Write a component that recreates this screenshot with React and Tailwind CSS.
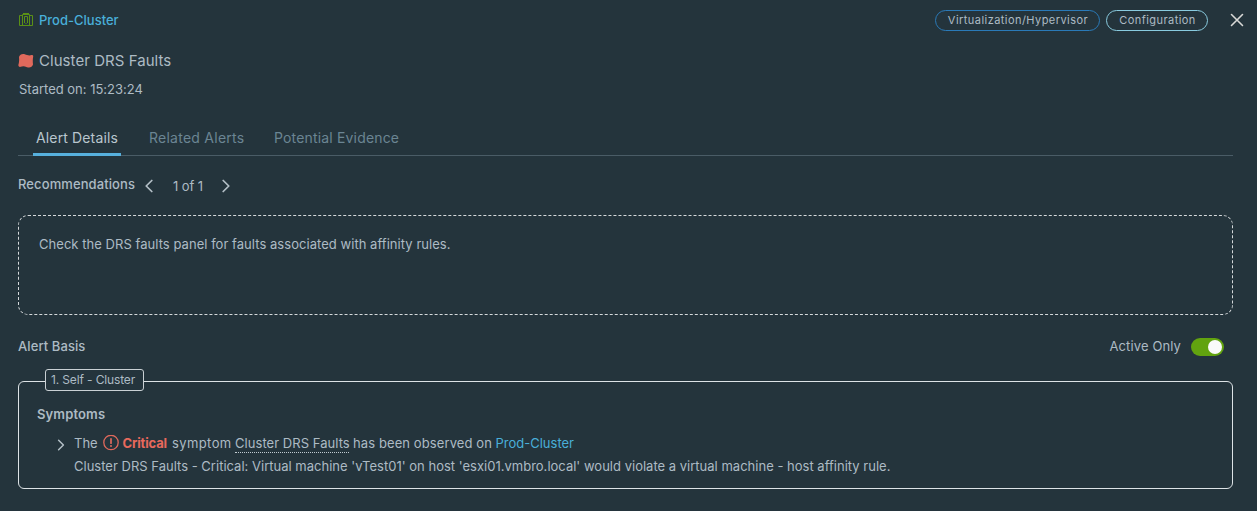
import React from 'react';

function ClusterIcon() {
  return (
    <svg width="16" height="16" viewBox="0 0 16 16" fill="none" stroke="#5a9016" strokeWidth="1" className="shrink-0">
      <path d="M4 3.5H1.5V13.5H14.5V3.5H12" />
      <path d="M4.5 13.5V2.5H11.5V13.5" />
      <path d="M5 1.5H11" />
      <path d="M6.5 11V4.5H9.5V11" />
      <path d="M7.5 11.5H8.5" />
    </svg>
  );
}

function FlagIcon() {
  return (
    <svg width="16" height="16" viewBox="0 0 16 16" fill="#e0695c" className="shrink-0">
      <path d="M1 4C1.8 1.4 4 0.6 6.8 1.2C9 1.9 10.8 3 13.6 2C14.8 1.6 15.4 2.4 15.2 3.6C14.7 6.4 14.7 8.6 15 11.6C14.2 14.4 11.6 15 9 14.2C6.6 13.2 4.8 12.8 2.8 13.8C1.2 14.2 0.1 13.2 0.4 11.8C1.2 9.4 1.3 7 1 4Z" />
    </svg>
  );
}

function Chevron({ flip, size }) {
  return (
    <svg width={size} height={size} viewBox="0 0 14 14" fill="none" stroke="#b3bfc6" strokeWidth="1.75" strokeLinecap="round" strokeLinejoin="round" className={flip ? 'mt-[3px] shrink-0 rotate-180' : 'mt-[3px] shrink-0'}>
      <path d="M4.2 1.5L9.8 7L4.2 12.5" />
    </svg>
  );
}

function CriticalIcon() {
  return (
    <svg width="16" height="16" viewBox="0 0 16 16" fill="none" stroke="#e0695c" className="shrink-0">
      <circle cx="8" cy="7.5" r="7.2" strokeWidth="1.3" />
      <path d="M8 3.8V8.2" strokeWidth="1.7" strokeLinecap="round" />
      <circle cx="8" cy="11" r="1" fill="#e0695c" stroke="none" />
    </svg>
  );
}

export default function App() {
  return (
    <main className="flex h-[511px] w-[1257px] flex-col bg-[#24343c] pl-[18px] pr-6 font-['Inter',sans-serif] text-[13px] leading-5 text-[#adbbc4]">
      <header className="-mr-4 flex h-10 items-center">
        <ClusterIcon />
        <a className="ml-[5px] font-medium text-[#49afd9]">Prod-Cluster</a>
        <div className="ml-auto flex items-center gap-1.5 text-[11px] tracking-[0.45px]">
          <span className="flex h-[21px] w-[165px] items-center justify-center rounded-full border border-[#2a7ab8] pl-px">Virtualization/Hypervisor</span>
          <span className="flex h-[21px] w-[102px] items-center justify-center rounded-full border border-[#89cbdf] pl-px">Configuration</span>
        </div>
        <svg width="14" height="14" viewBox="0 0 14 14" stroke="#d8d8d6" strokeWidth="1.6" strokeLinecap="round" className="ml-[22px] mr-[5px]">
          <path d="M1.5 1.5L12.5 12.5M12.5 1.5L1.5 12.5" />
        </svg>
      </header>

      <h1 className="mt-[11px] flex h-5 items-center gap-[5px] text-[15px] tracking-[0.05px]">
        <FlagIcon />
        Cluster DRS Faults
      </h1>
      <p className="mt-2 pl-px tracking-[-0.01px]">Started on: 15:23:24</p>

      <nav className="mt-[22px] flex h-[35px] border-b border-[#4a5c66] pl-[15px] text-[14px] text-[#6b8593]">
        <button className="h-[35px] w-[88px] border-b-3 border-[#57b0dd] pt-px tracking-[0.14px] text-[#b9c6ce]">Alert Details</button>
        <button className="ml-7 h-8 w-[95px] whitespace-nowrap pt-px tracking-[0.25px]">Related Alerts</button>
        <button className="ml-[30px] h-8 w-[125px] whitespace-nowrap pt-px tracking-[0.17px]">Potential Evidence</button>
      </nav>

      <div className="mt-[18px] flex h-5 items-center">
        <h2 className="w-[124px] font-medium tracking-[0.1px]">Recommendations</h2>
        <Chevron flip size={14} />
        <span className="ml-[17px] mt-[3px] w-[46px] tracking-[-0.1px]">1 of 1</span>
        <Chevron size={14} />
      </div>

      <section className="mt-[21px] h-[100px] shrink-0 rounded-[10px] border border-dashed border-[#d5d9db] px-5 pt-[18px] tracking-[0.045px]">
        Check the DRS faults panel for faults associated with affinity rules.
      </section>

      <div className="mt-[22px] flex h-5 items-center pr-[9px]">
        <h2 className="-mt-0.5 font-medium tracking-[0.09px]">Alert Basis</h2>
        <span className="-mt-0.5 ml-auto tracking-[0.12px]">Active Only</span>
        <span className="ml-2.5 flex h-[18px] w-[33px] items-center justify-end rounded-full bg-[#62a30f] pr-0.5">
          <span className="size-3.5 rounded-full bg-[#fafafa]" />
        </span>
      </div>

      <section className="mt-6 h-[108px] shrink-0 rounded-[6px] border border-[#dde3e6] px-[18px]">
        <div className="-mt-[13px] ml-2 flex h-[22px] w-[99px] items-center rounded-[3px] border border-[#c9d0d4] bg-[#24343c] pl-[5px] text-[12px] tracking-[-0.14px]">1. Self - Cluster</div>
        <h3 className="mt-[13px] font-semibold tracking-[0.13px]">Symptoms</h3>
        <div className="mt-[9px] flex h-5 items-center pl-[18px]">
          <Chevron size={12} />
          <span className="ml-[7px] w-[29px]">The</span>
          <CriticalIcon />
          <strong className="ml-[3.5px] w-[49.5px] font-bold tracking-[-0.15px] text-[#e8695c]">Critical</strong>
          <span className="w-[63px] tracking-[0.4px]">symptom</span>
          <span className="h-[19px] w-[114px] whitespace-nowrap border-b border-dotted border-[#c0cbd1] leading-[19px] tracking-[0.05px]">Cluster DRS Faults</span>
          <span className="ml-1 w-[142.5px] whitespace-nowrap tracking-[0.1px]">has been observed on</span>
          <a className="text-[#49afd9]">Prod-Cluster</a>
        </div>
        <p className="mt-[3px] whitespace-nowrap pl-[37px] tracking-[0.01px]">
          Cluster DRS Faults - Critical: Virtual machine 'vTest01' on host 'esxi01.vmbro.local' would violate a virtual machine - host affinity rule.
        </p>
      </section>
    </main>
  );
}
